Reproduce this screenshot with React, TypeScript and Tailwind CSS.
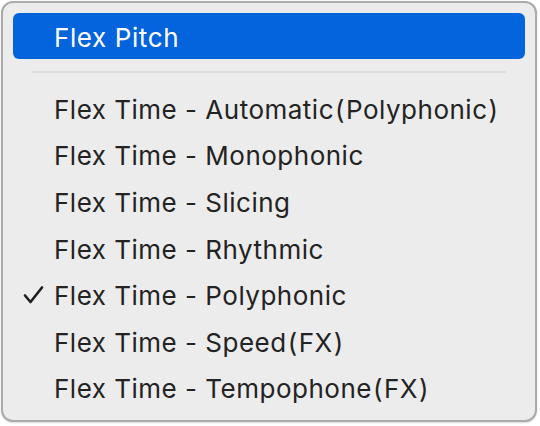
const items = [
  { name: 'Automatic', note: 'Polyphonic', checked: false },
  { name: 'Monophonic', checked: false },
  { name: 'Slicing', checked: false },
  { name: 'Rhythmic', checked: false },
  { name: 'Polyphonic', checked: true },
  { name: 'Speed', note: 'FX', checked: false },
  { name: 'Tempophone', note: 'FX', checked: false },
];

function CheckMark() {
  return (
    <svg width="22" height="20" viewBox="0 0 22 20" className="absolute left-[10px] top-1/2 -translate-y-1/2">
      <path
        d="M2 10.5 L7.5 17 L19 2.5"
        fill="none"
        stroke="#1e1e1e"
        strokeWidth="2.6"
        strokeLinecap="round"
        strokeLinejoin="round"
      />
    </svg>
  );
}

export default function App() {
  return (
    <div
      className="w-[540px] h-[426px] bg-white p-px"
      style={{ fontFamily: 'Inter, "Noto Sans CJK SC", sans-serif' }}
    >
      <div className="w-[536px] h-[421px] rounded-[12px] border-2 border-[#ababab] bg-[#ececec] px-[10px] pt-[10px] shadow-[0_1px_2px_rgba(0,0,0,0.15)]">
        <div className="h-[46px] rounded-[6px] bg-[#0464dc] flex items-center pl-[41px] pt-[3px] text-white text-[26px] tracking-[0.6px]">
          Flex Pitch
        </div>
        <div className="h-[26px] flex items-center px-[19px]">
          <div className="h-[2px] w-full bg-[#dcdcdc]" />
        </div>
        <ul>
          {items.map((item) => (
            <li
              key={item.name}
              className="relative h-[46.6px] flex items-center pl-[41px] pt-[2px] text-[26px] text-[#232323] tracking-[0.5px] whitespace-pre"
            >
              {item.checked && <CheckMark />}
              Flex Time - {item.name}
              {item.note && (
                <>
                  <span className="ml-[1px] mr-[1px]">(</span>
                  {item.note}
                  <span className="ml-[1px]">)</span>
                </>
              )}
            </li>
          ))}
        </ul>
      </div>
    </div>
  );
}
